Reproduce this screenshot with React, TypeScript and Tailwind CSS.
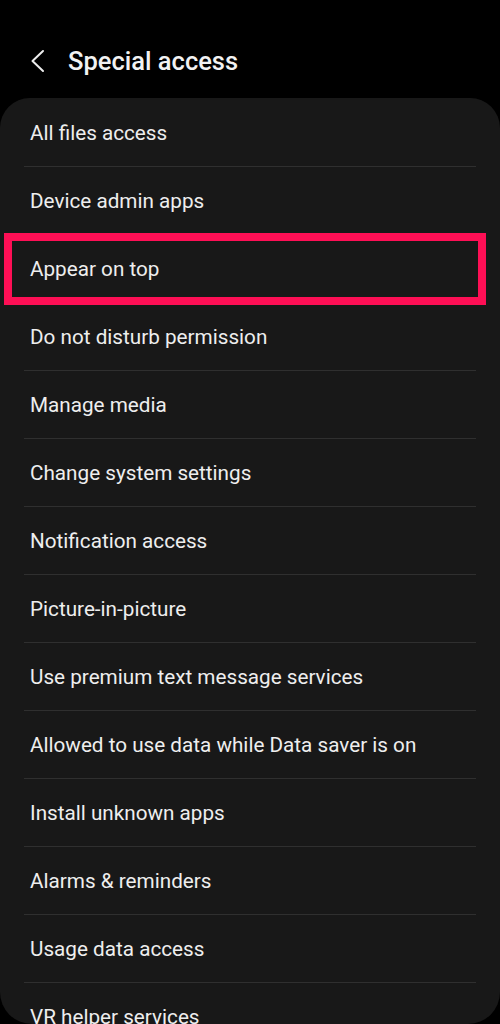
import React from "react";

const items = [
  "All files access",
  "Device admin apps",
  "Appear on top",
  "Do not disturb permission",
  "Manage media",
  "Change system settings",
  "Notification access",
  "Picture-in-picture",
  "Use premium text message services",
  "Allowed to use data while Data saver is on",
  "Install unknown apps",
  "Alarms & reminders",
  "Usage data access",
  "VR helper services",
];

export default function App() {
  return (
    <div
      className="w-[500px] h-[1024px] bg-black overflow-hidden flex flex-col"
      style={{ fontFamily: "Roboto, 'Noto Sans', sans-serif" }}
    >
      <div className="h-[98px] shrink-0 flex items-start pt-[43px]">
        <div className="flex items-center">
          <svg width="64" height="36" viewBox="0 0 64 36" className="shrink-0">
            <path d="M43 8 L32.5 18 L43 28" fill="none" stroke="#ededed" strokeWidth="2" strokeLinecap="round" strokeLinejoin="round" />
          </svg>
          <span className="text-[25.5px] font-medium text-[#f2f2f2] ml-[4px] leading-[36px]">
            Special access
          </span>
        </div>
      </div>
      <div className="flex-1 bg-[#181818] rounded-t-[30px] rounded-b-[32px] overflow-hidden">
        {items.map((label, i) => (
          <div key={label}>
            {i > 0 && i !== 2 && i !== 3 && (
              <div className="mx-[24px] h-px bg-[#2f2f2f]" />
            )}
            {i === 2 || i === 3 ? <div className="h-px" /> : null}
            {i === 2 ? (
              <div className="relative h-[67px] pt-[2px] flex items-center pl-[30px]">
                <div className="absolute left-[4px] right-[14px] top-[-2px] bottom-[-3px] border-[8px] border-[#fe0f55]" />
                <span className="text-[20.7px] text-[#eeeeee] leading-none">{label}</span>
              </div>
            ) : (
              <div className={`${i === 0 ? "h-[68px]" : "h-[67px]"} pt-[2px] flex items-center pl-[30px]`}>
                <span className="text-[20.7px] text-[#eeeeee] leading-none">{label}</span>
              </div>
            )}
          </div>
        ))}
      </div>
    </div>
  );
}
